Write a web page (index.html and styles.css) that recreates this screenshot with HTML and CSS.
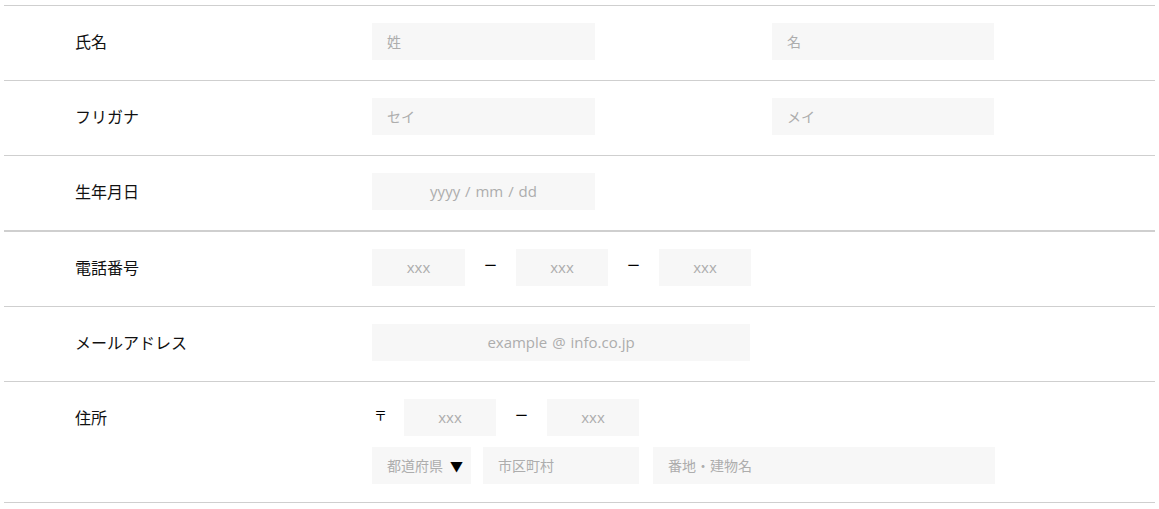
FILE: index.html
```html
<!DOCTYPE html>
<html lang="ja">
<head>
<meta charset="utf-8">
<title>フォーム</title>
<link rel="stylesheet" href="styles.css">
</head>
<body>
<div class="form">
  <div class="row">
    <div class="label">氏名</div>
    <div class="fields">
      <div class="input w223">姓</div>
      <div class="input w222 ml177">名</div>
    </div>
  </div>
  <div class="row">
    <div class="label">フリガナ</div>
    <div class="fields">
      <div class="input w223">セイ</div>
      <div class="input w222 ml177">メイ</div>
    </div>
  </div>
  <div class="row">
    <div class="label">生年月日</div>
    <div class="fields">
      <div class="input w223 center latin">yyyy / mm / dd</div>
    </div>
  </div>
  <div class="row thick">
    <div class="label">電話番号</div>
    <div class="fields">
      <div class="input w93 center latin">xxx</div>
      <span class="dash">ー</span>
      <div class="input w92 center latin">xxx</div>
      <span class="dash">ー</span>
      <div class="input w92 center latin">xxx</div>
    </div>
  </div>
  <div class="row">
    <div class="label">メールアドレス</div>
    <div class="fields">
      <div class="input w378 center latin">example @ info.co.jp</div>
    </div>
  </div>
  <div class="row last">
    <div class="label">住所</div>
    <div class="address">
      <div class="fields">
        <span class="zip">〒</span>
        <div class="input w92 center latin">xxx</div>
        <span class="dash">ー</span>
        <div class="input w92 center latin">xxx</div>
      </div>
      <div class="fields gap-top">
        <div class="input select">都道府県<span class="tri">▼</span></div>
        <div class="input w156 ml12">市区町村</div>
        <div class="input w342 ml14">番地・建物名</div>
      </div>
    </div>
  </div>
</div>
</body>
</html>
```
FILE: styles.css
```css
* { box-sizing: border-box; }
body {
  margin: 5px 4px 0;
  background: #fff;
  font-family: "Noto Sans CJK JP", "Noto Sans", sans-serif;
  color: #111;
}
.row {
  display: flex;
  border-top: 1px solid #cfcfcf;
  padding: 17px 0 20px;
}
.row.thick {
  border-top-width: 2px;
}
.row.last {
  border-bottom: 1px solid #cfcfcf;
  padding-bottom: 18px;
}
.label {
  width: 368px;
  padding-left: 71px;
  font-size: 16px;
  line-height: 37px;
  color: #111;
}
.fields {
  display: flex;
  align-items: center;
}
.address {
  display: flex;
  flex-direction: column;
}
.gap-top { margin-top: 11px; }
.input {
  height: 37px;
  background: #f7f7f7;
  color: #adadad;
  font-size: 14px;
  line-height: 37px;
  padding-left: 15px;
  white-space: nowrap;
}
.input.center { padding-left: 0; text-align: center; }
.input.latin {
  font-family: "Open Sans", "Noto Sans CJK JP", sans-serif;
  font-size: 15px;
  word-spacing: 1px;
}
.w223 { width: 223px; }
.w222 { width: 222px; }
.w93 { width: 93px; }
.w92 { width: 92px; }
.w378 { width: 378px; }
.w156 { width: 156px; }
.w342 { width: 342px; }
.ml177 { margin-left: 177px; }
.ml12 { margin-left: 12px; }
.ml14 { margin-left: 14px; }
.select { width: 99px; }
.tri { color: #000; font-size: 13px; margin-left: 7px; }
.dash {
  width: 51px;
  text-align: center;
  font-size: 13px;
  line-height: 37px;
  color: #000;
  position: relative;
  top: -3px;
}
.zip {
  width: 32px;
  padding-left: 2px;
  font-size: 13px;
  line-height: 37px;
  color: #000;
  position: relative;
  top: -3px;
}
```
